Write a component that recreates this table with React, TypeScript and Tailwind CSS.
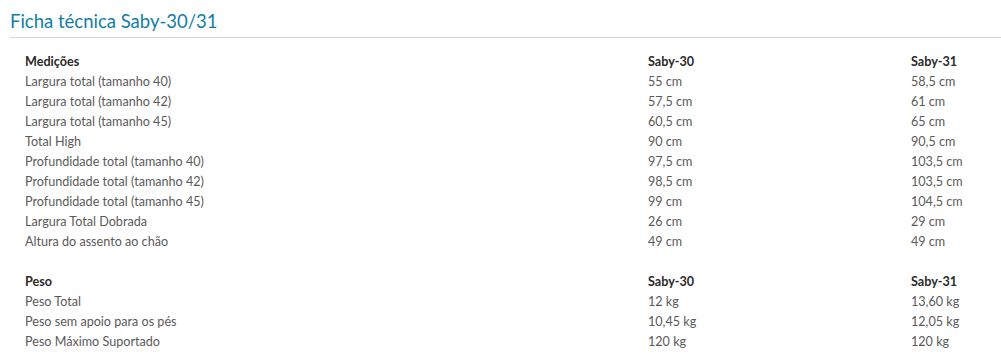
const sections = [
  {
    title: "Medições",
    rows: [
      ["Largura total (tamanho 40)", "55 cm", "58,5 cm"],
      ["Largura total (tamanho 42)", "57,5 cm", "61 cm"],
      ["Largura total (tamanho 45)", "60,5 cm", "65 cm"],
      ["Total High", "90 cm", "90,5 cm"],
      ["Profundidade total (tamanho 40)", "97,5 cm", "103,5 cm"],
      ["Profundidade total (tamanho 42)", "98,5 cm", "103,5 cm"],
      ["Profundidade total (tamanho 45)", "99 cm", "104,5 cm"],
      ["Largura Total Dobrada", "26 cm", "29 cm"],
      ["Altura do assento ao chão", "49 cm", "49 cm"],
    ],
  },
  {
    title: "Peso",
    rows: [
      ["Peso Total", "12 kg", "13,60 kg"],
      ["Peso sem apoio para os pés", "10,45 kg", "12,05 kg"],
      ["Peso Máximo Suportado", "120 kg", "120 kg"],
    ],
  },
];

function Row({ cells, head }: { cells: string[]; head?: boolean }) {
  return (
    <div
      className={`grid grid-cols-[623px_263px_1fr] h-5 items-center text-[12.6px] ${
        head ? "font-bold text-[#2a2a2a]" : "text-[#5a5a5a]"
      }`}
    >
      {cells.map((c, i) => (
        <span key={i}>{c}</span>
      ))}
    </div>
  );
}

export default function App() {
  return (
    <div className="bg-white w-[1001px] h-[359px] pl-[10px] font-['Lato','Liberation_Sans',sans-serif]">
      <h2 className="text-[18.5px] text-[#127ea5] pt-[9px] pb-[4px] leading-[24px]">Ficha técnica Saby-30/31</h2>
      <div className="border-t border-[#d4d4d4]" />
      <div className="pl-[15px] pt-[14px]">
        {sections.map((s, i) => (
          <div key={s.title} className={i > 0 ? "mt-5" : ""}>
            <Row head cells={[s.title, "Saby-30", "Saby-31"]} />
            {s.rows.map((r) => (
              <Row key={r[0]} cells={r} />
            ))}
          </div>
        ))}
      </div>
    </div>
  );
}
